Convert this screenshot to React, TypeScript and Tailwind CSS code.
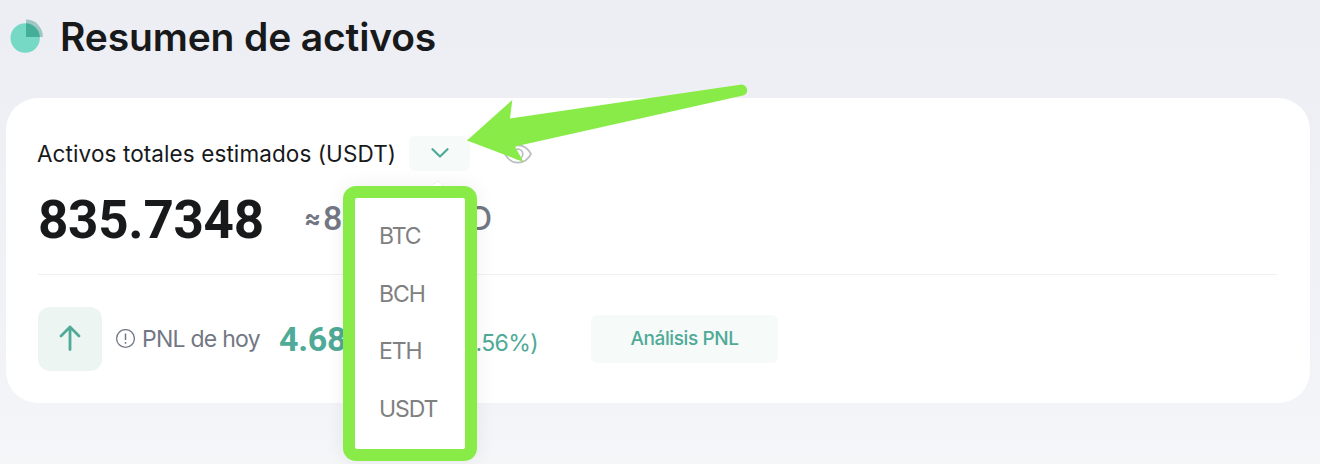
const currencies = ['BTC', 'BCH', 'ETH', 'USDT'];

function PieIcon() {
  return (
    <svg className="h-[36px] w-[34px] shrink-0" viewBox="0 0 34 36" aria-hidden="true">
      <circle cx="15.2" cy="20" r="14.700" fill="#75d9c5" />
      <path d="M16 1.500A16.800 17 0 0 1 32.800 19H16Z" fill="#1f8a75" fillOpacity="0.38" />
      <path d="M16 5.300A14.700 14.700 0 0 1 29.800 19H16Z" fill="#26917b" fillOpacity="0.3" />
    </svg>
  );
}

function EyeIcon() {
  return (
    <svg className="ml-[34px] h-[20px] w-[28px]" viewBox="0 0 28 20" fill="none" stroke="#babdc2" strokeWidth="1.7" aria-hidden="true">
      <path d="M1 10C4 4.5 8.5 1.3 14 1.3S24 4.5 27 10C24 15.5 19.500 18.700 14 18.700S4 15.500 1 10Z" />
      <circle cx="14" cy="10" r="4.800" />
    </svg>
  );
}

function CurrencyMenu() {
  return (
    <div className="absolute left-[343px] top-[186px] h-[275px] w-[134px] rounded-[13px] bg-[#89eb47] p-[12px] shadow-[0_0_20px_rgba(0,0,0,0.07)]">
      <ul className="flex h-[251px] flex-col rounded-[2px] bg-white pl-[24px] pt-[9px] text-[23px] tracking-[-1.1px] text-[#808080]">
        {currencies.map((c) => (
          <li key={c} className="h-[57.700px] leading-[58px]">{c}</li>
        ))}
      </ul>
    </div>
  );
}

export default function App() {
  return (
    <main className="relative h-[464px] w-[1320px] overflow-hidden bg-linear-to-b from-[#edeef3] via-[#f1f2f7] via-70% to-[#f5f6f8] font-['Inter','Liberation_Sans',sans-serif] text-[#17191b]">
      <header className="flex h-[98px] items-start pl-[10px] pt-[18px]">
        <PieIcon />
        <h1 className="ml-[16px] whitespace-nowrap text-[39px] font-semibold leading-[38px] tracking-[-0.15px]">Resumen de activos</h1>
      </header>

      <section className="ml-[6px] flex h-[305px] w-[1304px] flex-col rounded-[32px] bg-white px-[32px] pt-[38px]">
        <div className="flex h-[35px] items-center">
          <span className="-ml-[1px] w-[372px] whitespace-nowrap text-[22.500px] tracking-[0.1px]">Activos totales estimados (USDT)</span>
          <button className="flex h-[35px] w-[61px] shrink-0 items-center justify-center rounded-[6px] bg-[#f6faf9]" aria-label="Moneda">
            <svg className="mb-[1px] h-[10px] w-[18px]" viewBox="0 0 18 10" fill="none" stroke="#4faa97" strokeWidth="2.200" strokeLinecap="round" strokeLinejoin="round">
              <path d="M1.500 1.200L9 8.500L16.500 1.200" />
            </svg>
          </button>
          <EyeIcon />
        </div>

        <div className="mr-[1px] flex h-[104px] shrink-0 items-start border-b border-[#eff0f2] pt-[17px]">
          <strong className="w-[266px] font-['Roboto'] text-[53px] font-bold leading-[64px] tracking-[-0.3px]">835.7348</strong>
          <span className="flex w-[188px] items-center justify-between whitespace-nowrap text-[32px] leading-[61px] text-[#737784]">
            <span className="flex items-center gap-[2px]">
              <span className="text-[25px] font-bold">≈</span>
              <span className="font-['Roboto'] text-[34px] font-medium">8</span>
            </span>
            <span className="font-medium">D</span>
          </span>
        </div>

        <div className="flex h-[128px] shrink-0 items-center">
          <div className="flex h-[64px] w-[64px] items-center justify-center rounded-[12px] bg-[#edf5f3]">
            <svg className="mb-[3px] h-[26px] w-[22px]" viewBox="0 0 22 26" fill="none" stroke="#4faa97" strokeWidth="2.800" strokeLinecap="round" strokeLinejoin="round">
              <path d="M11 24.500V2M2 11L11 2L20 11" />
            </svg>
          </div>
          <svg className="ml-[13px] h-[20px] w-[20px]" viewBox="0 0 20 20" fill="none" stroke="#737784" strokeWidth="1.300">
            <circle cx="10.500" cy="9.500" r="8.900" />
            <path d="M10.500 4.500V11M10.500 13V14.800" strokeWidth="1.500" />
          </svg>
          <span className="ml-[7px] w-[137px] whitespace-nowrap text-[23px] tracking-[-0.75px] text-[#737784]">PNL de hoy</span>
          <span className="w-[112px] font-['Roboto'] text-[34px] font-bold tracking-[-0.3px] text-[#4faa97]">4.68</span>
          <span className="mt-[8px] flex w-[147px] justify-end whitespace-nowrap text-[23px] tracking-[-0.6px] text-[#4faa97]">.56%)</span>
          <button className="ml-[53px] h-[48px] w-[187px] rounded-[6px] bg-[#f6faf9] text-[19px] font-medium tracking-[-0.4px] text-[#4faa97]">Análisis PNL</button>
        </div>
      </section>

      <CurrencyMenu />
      <svg className="absolute left-[430px] top-[180px] h-[6px] w-[16px]" viewBox="0 0 16 6" aria-hidden="true">
        <path d="M1 6L8 1L13 6" fill="#fff" stroke="#eeeeef" />
      </svg>
      <svg className="absolute left-[460px] top-[80px] h-[90px] w-[300px]" viewBox="460 80 300 90" aria-hidden="true">
        <path d="M467 140.500L512.300 100L510 118.500L740 84.700Q745 84 747 89Q748 94 743 95.500L515 146.500L523.500 162Z" fill="#89eb47" />
      </svg>
    </main>
  );
}
